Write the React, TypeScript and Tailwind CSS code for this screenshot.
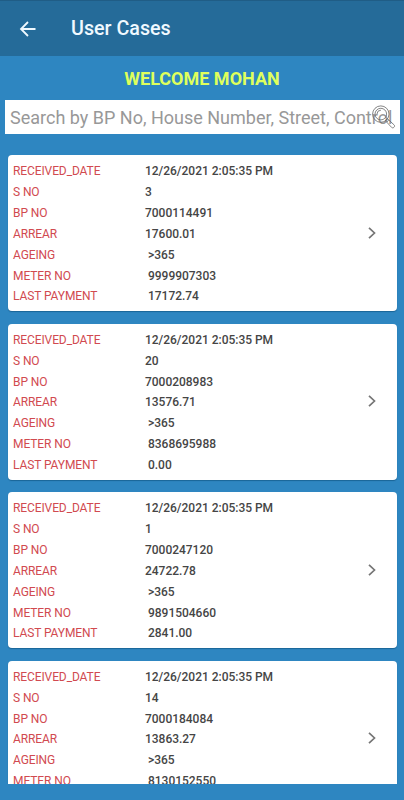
type Case = {
  serial: string;
  bp: string;
  arrear: string;
  meter: string;
  payment?: string;
};

const cases: Case[] = [
  { serial: "3", bp: "7000114491", arrear: "17600.01", meter: "9999907303", payment: "17172.74" },
  { serial: "20", bp: "7000208983", arrear: "13576.71", meter: "8368695988", payment: "0.00" },
  { serial: "1", bp: "7000247120", arrear: "24722.78", meter: "9891504660", payment: "2841.00" },
  { serial: "14", bp: "7000184084", arrear: "13863.27", meter: "8130152550" },
];

function Row({ label, value, inset = false }: { label: string; value: string; inset?: boolean }) {
  return (
    <div className="flex h-[20.84px] items-center whitespace-nowrap text-[12px] leading-5">
      <span className="w-[132px] shrink-0 tracking-[-0.1px] text-[#d14a50]">{label}</span>
      <span className={`font-medium tracking-[-0.02px] text-[#454545] ${inset ? "pl-[3px]" : ""}`}>{value}</span>
    </div>
  );
}

function CaseCard({ item }: { item: Case }) {
  return (
    <article className="flex h-[156px] shrink-0 justify-between rounded-[4px] bg-white pt-[6px] pr-[19px] pl-[5px] shadow-[0_1px_1px_rgba(0,60,100,0.45)]">
      <div>
        <Row label="RECEIVED_DATE" value="12/26/2021 2:05:35 PM" />
        <Row label="S NO" value={item.serial} />
        <Row label="BP NO" value={item.bp} />
        <Row label="ARREAR" value={item.arrear} />
        <Row label="AGEING" value=">365" inset />
        <Row label="METER NO" value={item.meter} inset />
        {item.payment && <Row label="LAST PAYMENT" value={item.payment} inset />}
      </div>
      <svg className="mt-[65.5px] h-3 w-3" viewBox="0 0 12 12" fill="none" stroke="#757575" strokeWidth="1.7">
        <path d="M3 .8 8.5 6 3 11.2" />
      </svg>
    </article>
  );
}

function SearchIcon() {
  return (
    <svg className="absolute top-[5px] right-[4px] h-6 w-6" viewBox="0 0 24 24" fill="none" stroke="#666" strokeWidth="0.8">
      <circle cx="8.8" cy="9.1" r="8.2" />
      <circle cx="8.8" cy="9.1" r="5.8" />
      <path d="M5 9a3.9 3.9 0 0 1 3.9-3.8" />
      <path d="m13.5 15.8 2-2 6.6 6.1c1.5 1.5-1 4-2.5 2.5zM14.8 17l2-1.9" />
    </svg>
  );
}

export default function App() {
  return (
    <main className="flex h-[800px] w-[404px] flex-col overflow-hidden bg-[#2e86c1] font-['Roboto',sans-serif]">
      <header className="flex h-14 shrink-0 items-center border-t border-[#205d86] bg-[#256b99] pl-[18px] text-[#f0f9ff]">
        <svg className="h-5 w-5" viewBox="0 0 20 20" fill="none" stroke="currentColor" strokeWidth="1.8">
          <path d="M17.5 10H3M10 3l-7 7 7 7" />
        </svg>
        <h1 className="ml-[33px] text-[19.7px] font-medium leading-6">User Cases</h1>
      </header>
      <h2 className="h-11 shrink-0 text-center text-[18px] font-bold leading-[46px] text-[#dfff5c]">WELCOME MOHAN</h2>
      <div className="relative mr-[4px] ml-[5px] h-[34px] shrink-0 bg-white pl-[5px]">
        <p className="overflow-hidden whitespace-nowrap text-[18px] leading-[36px] text-[#989898]">
          Search by BP No, House Number, Street, Control
        </p>
        <SearchIcon />
      </div>
      <section className="mt-[17px] mr-[5px] ml-[6px] flex h-[633px] shrink-0 flex-col gap-[12.5px] overflow-hidden px-[2px] pt-[4px]">
        {cases.map((item) => (
          <CaseCard key={item.serial} item={item} />
        ))}
      </section>
    </main>
  );
}
